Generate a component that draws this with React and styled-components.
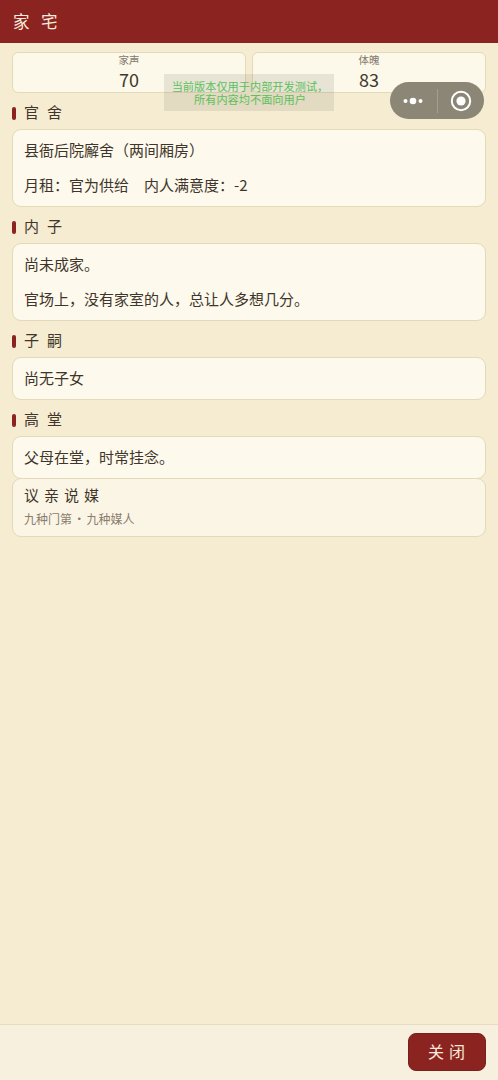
import React from 'react';
import styled, { createGlobalStyle } from 'styled-components';

const maroon = '#8b2420';
const cjk = `'Noto Sans CJK SC', 'Noto Sans', sans-serif`;

const sections = [
  { title: '官舍', lines: ['县衙后院廨舍（两间厢房）', '月租：官为供给　内人满意度：-2'] },
  { title: '内子', lines: ['尚未成家。', '官场上，没有家室的人，总让人多想几分。'] },
  { title: '子嗣', lines: ['尚无子女'] },
  { title: '高堂', lines: ['父母在堂，时常挂念。'] },
];

export default function App() {
  return (
    <Page>
      <GlobalStyle />
      <Header>家宅</Header>
      <Main>
        <Stats>
          <StatCard>
            <StatLabel>家声</StatLabel>
            <StatValue>70</StatValue>
          </StatCard>
          <StatCard>
            <StatLabel>体魄</StatLabel>
            <StatValue>83</StatValue>
          </StatCard>
        </Stats>
        {sections.map(section => (
          <section key={section.title}>
            <SectionTitle>{section.title}</SectionTitle>
            <Card>
              {section.lines.map(line => (
                <CardLine key={line}>{line}</CardLine>
              ))}
            </Card>
          </section>
        ))}
        <ActionCard>
          <ActionTitle>议亲说媒</ActionTitle>
          <ActionHint>九种门第 · 九种媒人</ActionHint>
        </ActionCard>
      </Main>
      <Footer>
        <CloseButton>关闭</CloseButton>
      </Footer>
      <DevNotice>
        当前版本仅用于内部开发测试，
        <br />
        所有内容均不面向用户
      </DevNotice>
      <Capsule>
        <CapsulePart>
          <svg width="24" height="10" viewBox="0 0 24 10">
            <circle cx="4.5" cy="5" r="2" fill="#fff" />
            <circle cx="12" cy="5" r="3.3" fill="#fff" />
            <circle cx="19.5" cy="5" r="2" fill="#fff" />
          </svg>
        </CapsulePart>
        <CapsuleDivider />
        <CapsulePart>
          <svg width="22" height="22" viewBox="0 0 22 22">
            <circle cx="11" cy="11" r="9.2" fill="none" stroke="#fff" strokeWidth="2" />
            <circle cx="11" cy="11" r="4.6" fill="#fff" />
          </svg>
        </CapsulePart>
      </Capsule>
    </Page>
  );
}

const GlobalStyle = createGlobalStyle`
  html, body {
    margin: 0;
    padding: 0;
    background: #f5ecd2;
    font-family: ${cjk};
  }
`;
const Page = styled.div`
  position: relative;
  display: flex;
  flex-direction: column;
  width: 498px;
  height: 1080px;
  overflow: hidden;
  background: #f5ecd2;
  color: #40352b;
`;
const Header = styled.header`
  flex: none;
  box-sizing: border-box;
  height: 43px;
  padding: 0 13px;
  background: ${maroon};
  color: #fbeadd;
  font-size: 16.5px;
  line-height: 42px;
  letter-spacing: 11.5px;
`;
const Main = styled.main`
  flex: 1;
  padding: 9px 12px 0;
`;
const Stats = styled.div`
  display: grid;
  grid-template-columns: 1fr 1fr;
  gap: 6px;
`;
const StatCard = styled.div`
  box-sizing: border-box;
  height: 41px;
  border: 1px solid #e4d9b8;
  border-radius: 6px;
  background: #fcf8ea;
  text-align: center;
`;
const StatLabel = styled.div`
  font-size: 10.5px;
  line-height: 14px;
  color: #85786a;
`;
const StatValue = styled.div`
  font-size: 18px;
  line-height: 24px;
  color: #40382f;
`;
const SectionTitle = styled.h2`
  display: flex;
  align-items: center;
  gap: 8px;
  box-sizing: border-box;
  height: 36px;
  margin: 0;
  padding-top: 2px;
  font-size: 15px;
  font-weight: 400;
  line-height: 20px;
  letter-spacing: 8px;
  color: #40352b;
  &::before {
    content: '';
    width: 4px;
    height: 13px;
    margin-top: 2px;
    border-radius: 2px;
    background: ${maroon};
  }
`;
const Card = styled.div`
  display: flex;
  flex-direction: column;
  gap: 14px;
  box-sizing: border-box;
  padding: 9px 11px 11px;
  border: 1px solid #e4d9b8;
  border-radius: 9px;
  background: #fdf9ec;
`;
const CardLine = styled.p`
  margin: 0;
  font-size: 15px;
  line-height: 21px;
  color: #40352b;
`;
const ActionCard = styled.div`
  box-sizing: border-box;
  height: 59px;
  margin-top: -1px;
  padding: 5px 11px 0;
  border: 1px solid #e4d9b8;
  border-radius: 9px;
  background: #fbf5e5;
`;
const ActionTitle = styled.div`
  font-size: 15px;
  line-height: 21px;
  letter-spacing: 5px;
  color: #40352b;
`;
const ActionHint = styled.div`
  margin-top: 5px;
  font-size: 12px;
  line-height: 18px;
  word-spacing: -1.5px;
  color: #8a7d6e;
`;
const Footer = styled.footer`
  flex: none;
  display: flex;
  justify-content: flex-end;
  align-items: flex-start;
  box-sizing: border-box;
  height: 56px;
  padding: 8px 12px 0;
  border-top: 1px solid #e8dcc0;
  background: #f8f0de;
`;
const CloseButton = styled.button`
  width: 78px;
  height: 38px;
  padding: 0 0 2px 4px;
  border: 1px solid #7c1f1c;
  border-radius: 8px;
  background: ${maroon};
  color: #fbeadd;
  font-family: inherit;
  font-size: 16px;
  letter-spacing: 5px;
`;
const DevNotice = styled.div`
  position: absolute;
  top: 74px;
  left: 164px;
  width: 170px;
  height: 37px;
  padding: 6px 0 0 2px;
  box-sizing: border-box;
  background: rgba(130, 122, 105, 0.16);
  color: #5cc05c;
  font-size: 11.2px;
  line-height: 13px;
  text-align: center;
`;
const Capsule = styled.div`
  position: absolute;
  top: 82px;
  left: 390px;
  display: flex;
  align-items: center;
  width: 94px;
  height: 37px;
  border-radius: 19px;
  background: #8b8676;
`;
const CapsulePart = styled.div`
  flex: 1;
  display: flex;
  justify-content: center;
  align-items: center;
`;
const CapsuleDivider = styled.div`
  width: 1px;
  height: 24px;
  background: rgba(255, 255, 255, 0.2);
`;
